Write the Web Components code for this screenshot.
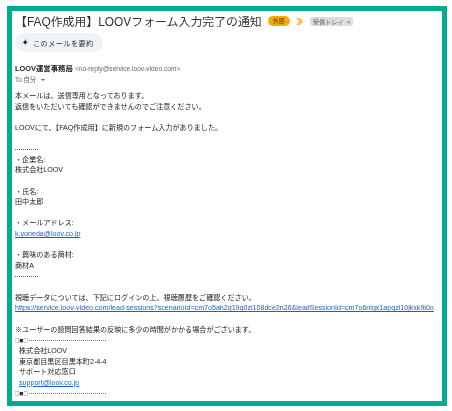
<!DOCTYPE html>
<html lang="ja">
<head>
<meta charset="utf-8">
<title>FAQ作成用</title>
<style>
  html, body { margin: 0; background: #fff; }
  body { font-family: "Liberation Sans", "Noto Sans CJK JP", sans-serif; }
  mail-body p { margin: 0 0 10.62px; }
</style>
</head>
<body>
<mail-frame>
  <mail-subject>【FAQ作成用】LOOVフォーム入力完了の通知</mail-subject>
  <summary-chip>このメールを要約</summary-chip>
  <mail-sender name="LOOV運営事務局" address="&lt;no-reply@service.loov-video.com&gt;"></mail-sender>
  <mail-body>
    <p>本メールは、送信専用となっております。<br>返信をいただいても確認ができませんのでご注意ください。</p>
    <p>LOOVにて、【FAQ作成用】に新規のフォーム入力がありました。</p>
    <p><mail-rule width="23"></mail-rule><br>・企業名:<br>株式会社LOOV</p>
    <p>・氏名:<br>田中太郎</p>
    <p>・メールアドレス:<br><mail-link>k.yoneda@loov.co.jp</mail-link></p>
    <p>・興味のある商材:<br>商材A<br><mail-rule width="23"></mail-rule></p>
    <p>視聴データについては、下記にログインの上、視聴履歴をご確認ください。<br><mail-link>https://service.loov-video.com/lead-sessions?scenarioId=cm7o5ah2g19g0zi108dce2n26&amp;leadSessionId=cm7o6nlgx1apqzi10jkxk9i0o</mail-link></p>
    <div>※ユーザーの設問回答結果の反映に多少の時間がかかる場合がございます。</div>
    <mail-divider></mail-divider>
    <mail-signature>株式会社LOOV<br>東京都目黒区目黒本町2-4-4<br>サポート対応窓口<br><mail-link>support@loov.co.jp</mail-link></mail-signature>
    <mail-divider></mail-divider>
  </mail-body>
</mail-frame>

<script>
class MailFrame extends HTMLElement {
  constructor() {
    super();
    this.attachShadow({ mode: 'open' });
    this.shadowRoot.innerHTML = `
      <style>
        :host {
          display: block;
          box-sizing: border-box;
          width: 440px;
          height: 400px;
          margin: 6px 0 0 7px;
          border: 5px solid #00ab92;
          background: #fff;
          overflow: hidden;
        }
        .inner { padding-left: 3px; filter: blur(0.4px); }
      </style>
      <div class="inner"><slot></slot></div>
    `;
  }
}

class MailSubject extends HTMLElement {
  constructor() {
    super();
    this.attachShadow({ mode: 'open' });
    this.shadowRoot.innerHTML = `
      <style>
        :host {
          display: flex;
          align-items: center;
          height: 20px;
          color: #333;
          font-size: 11.9px;
        }
        .text { white-space: nowrap; margin-top: -2px; }
        .external {
          margin-left: 6px;
          width: 22px;
          height: 10px;
          border-radius: 5px;
          background: #f9ab00;
          color: #5a4000;
          font-size: 6px;
          line-height: 10px;
          text-align: center;
        }
        svg { margin-left: 6px; }
        .label {
          display: flex;
          gap: 3px;
          align-items: center;
          margin-left: 6px;
          padding: 0 3px;
          height: 9px;
          border-radius: 2px;
          background: #dddddd;
          color: #666;
          font-size: 6.2px;
        }
      </style>
      <span class="text"><slot></slot></span>
      <span class="external">外部</span>
      <svg width="8" height="7" viewBox="0 0 8 7"><path d="M0 0h4l3.500 3.500-3.500 3.500H0l3-3.500z" fill="#f6c453"/></svg>
      <span class="label">受信トレイ <span>×</span></span>
    `;
  }
}

class SummaryChip extends HTMLElement {
  constructor() {
    super();
    this.attachShadow({ mode: 'open' });
    this.shadowRoot.innerHTML = `
      <style>
        :host {
          display: flex;
          align-items: center;
          width: 88px;
          height: 19px;
          margin-top: 2px;
          border-radius: 10px;
          background: #eff2f7;
          color: #333;
          font-size: 7.2px;
          letter-spacing: 0.4px;
          white-space: nowrap;
        }
        svg { margin: 0 5px 0 6.5px; }
      </style>
      <svg width="6.5" height="6.5" viewBox="0 0 24 24"><path d="M12 0c1 7 4 11 12 12-8 1-11 5-12 12-1-7-4-11-12-12 8-1 11-5 12-12z" fill="#1f1f1f"/></svg>
      <slot></slot>
    `;
  }
}

class MailSender extends HTMLElement {
  constructor() {
    super();
    this.attachShadow({ mode: 'open' });
    this.shadowRoot.innerHTML = `
      <style>
        :host {
          display: block;
          margin-top: 11px;
          font-size: 7.4px;
          line-height: 11px;
          color: #222;
        }
        b { font-weight: 700; }
        .addr { color: #666; font-size: 6.6px; }
        .to { color: #5e5e5e; font-size: 6.3px; }
        .caret {
          display: inline-block;
          margin-left: 3px;
          border: 2px solid transparent;
          border-top: 2.5px solid #5e5e5e;
          border-bottom: 0;
          vertical-align: 1px;
        }
      </style>
      <div><b>${this.getAttribute('name')}</b> <span class="addr"></span></div>
      <div class="to">To 自分 <span class="caret"></span></div>
    `;
    this.shadowRoot.querySelector('.addr').textContent = this.getAttribute('address');
  }
}

class MailBody extends HTMLElement {
  constructor() {
    super();
    this.attachShadow({ mode: 'open' });
    this.shadowRoot.innerHTML = `
      <style>
        :host {
          display: block;
          margin-top: 6px;
          color: #222;
          font-size: 7.1px;
          line-height: 10.62px;
          white-space: nowrap;
        }
      </style>
      <slot></slot>
    `;
  }
}

class MailLink extends HTMLElement {
  constructor() {
    super();
    this.attachShadow({ mode: 'open' });
    this.shadowRoot.innerHTML = `
      <style>
        :host { display: inline; color: #1a5fd0; text-decoration: underline; }
      </style>
      <slot></slot>
    `;
  }
}

class MailRule extends HTMLElement {
  constructor() {
    super();
    this.attachShadow({ mode: 'open' });
    this.shadowRoot.innerHTML = `
      <style>
        :host {
          display: inline-block;
          width: ${this.getAttribute('width')}px;
          height: 1px;
          background: repeating-linear-gradient(90deg, #666 0 1px, transparent 1px 2px);
          vertical-align: middle;
        }
      </style>
    `;
  }
}

class MailDivider extends HTMLElement {
  constructor() {
    super();
    this.attachShadow({ mode: 'open' });
    this.shadowRoot.innerHTML = `
      <style>
        :host {
          display: flex;
          align-items: center;
          gap: 2px;
          height: 10.62px;
          font-family: "Noto Sans CJK JP", sans-serif;
          font-size: 4.2px;
          color: #333;
        }
        span { width: 12px; letter-spacing: 0; white-space: nowrap; }
        i {
          flex: none;
          width: 78px;
          height: 1px;
          background: repeating-linear-gradient(90deg, #777 0 1px, transparent 1px 2px);
        }
      </style>
      <span>□■□</span><i></i>
    `;
  }
}

class MailSignature extends HTMLElement {
  constructor() {
    super();
    this.attachShadow({ mode: 'open' });
    this.shadowRoot.innerHTML = `
      <style>
        :host { display: block; padding-left: 4px; }
      </style>
      <slot></slot>
    `;
  }
}

customElements.define('mail-frame', MailFrame);
customElements.define('mail-subject', MailSubject);
customElements.define('summary-chip', SummaryChip);
customElements.define('mail-sender', MailSender);
customElements.define('mail-body', MailBody);
customElements.define('mail-link', MailLink);
customElements.define('mail-rule', MailRule);
customElements.define('mail-divider', MailDivider);
customElements.define('mail-signature', MailSignature);
</script>
</body>
</html>
